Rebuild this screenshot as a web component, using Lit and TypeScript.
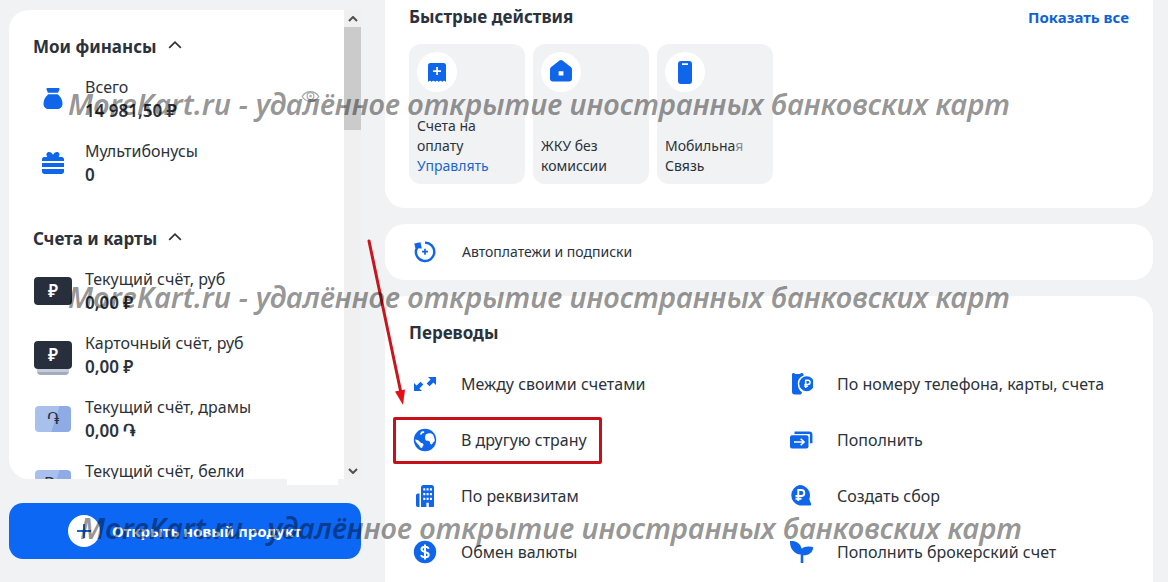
import { LitElement, html, css, svg, nothing } from "lit";
import { customElement, property } from "lit/decorators.js";

const ICONS: Record<string, unknown> = {
  bag: svg`<path fill="currentColor" d="M6.500 1h11c1 0 1.300.9.900 1.700L17 5.700H7L5.600 2.700C5.200 1.900 5.500 1 6.500 1ZM7.300 7.300h9.400c3 2.300 4.800 6 4.800 9.200 0 3.600-2 5.500-5.500 5.500H8c-3.500 0-5.500-1.900-5.500-5.500 0-3.200 1.800-6.900 4.800-9.200Z"/>`,
  gift: svg`<path fill="currentColor" d="M1 8.500C1 7 1.800 6 3.300 6h3C4.700 3.500 5.600 1 8 1c1.800 0 3.200 1.200 4 2.700C12.800 2.200 14.200 1 16 1c2.400 0 3.300 2.500 1.700 5h3C22.200 6 23 7 23 8.500V10H1ZM1 12h22v4H1ZM1 18h22v2.500c0 1.500-1 2.500-2.500 2.500h-17C2 23 1 22 1 20.500Z"/>`,
  bill: svg`<path fill="currentColor" fill-rule="evenodd" d="M5.500 3h13A2.500 2.500 0 0 1 21 5.500V22c-1.300-1.600-2.700-1.600-3.700 0-1.200-1.600-2.500-1.600-3.500 0-1.200-1.600-2.500-1.600-3.600 0-1.100-1.600-2.400-1.600-3.500 0-1-1.600-2.400-1.600-3.700 0V5.500A2.500 2.500 0 0 1 5.500 3ZM11.200 7v3.200H8v1.700h3.200V15h1.700v-3.100H16v-1.700h-3.100V7Z"/>`,
  home: svg`<path fill="currentColor" fill-rule="evenodd" d="M10.500.6a2.400 2.400 0 0 1 3 0l8.300 6.500c.8.600 1.200 1.500 1.200 2.400v8.900c0 1.900-1.100 3-3 3H4c-1.900 0-3-1.100-3-3V9.500c0-.9.400-1.800 1.200-2.400ZM9.600 11.200v4.400h4.800v-4.400Z"/>`,
  phone: svg`<path fill="currentColor" fill-rule="evenodd" d="M8 1h8c2 0 3 1 3 3v17c0 2-1 3-3 3H8c-2 0-3-1-3-3V4c0-2 1-3 3-3Zm1 2.300V5h6V3.300Z"/>`,
  repeat: svg`<path fill="none" stroke="currentColor" stroke-width="2.400" d="M12 2.600a9.200 9.200 0 1 1-8.700 6.500"/><path fill="currentColor" d="M1.300 3.500 7.500 2.200l1.300 6.200-3.300-.2-2.300 3.200Z"/><path stroke="currentColor" stroke-width="1.700" d="M12 8.700v6M9 11.700h6"/>`,
  swap: svg`<path fill="currentColor" d="M15 5h8v8l-2.600-2.600-3.900 3.900-2.800-2.800 3.900-3.900ZM1 11l2.600 2.600 3.900-3.900 2.800 2.800-3.900 3.900L9 19H1Z"/>`,
  globe: svg`<circle cx="12" cy="12" r="11.200" fill="currentColor"/><path fill="#fff" d="M8.500 3.600c2-.8 3.300-.2 2.600.8-.7 1-2 .4-2.200 1.700-.2 1-2.200.7-1.700-.7ZM12.600 6.700c2.300-1.700 5.300-2.100 7.300-.1 1 2 2 4.400 1.800 6.300-.5 1-1.500.9-2 2-.4 1.500-1.500 2.100-2.400.8-.5-1.300 0-2.400-1.400-2.800-1.400-.2-2.700.2-3.400-.9-.6-1.300-.4-4.400.1-5.300ZM2.100 11.500c2.500.3 4 1.100 4.700 2.300.8 1.400 2.600.9 3.500 2.300.7 1.600-.8 2.100-1.300 4-2-.2-2.400-1.800-3.500-3.300-.9-1.200-2.900-2.300-3.400-5.300Z"/>`,
  office: svg`<path fill="currentColor" fill-rule="evenodd" d="M8 3.500C8 2 9 1 10.500 1h8C20 1 21 2 21 3.500V22c0 .7-.5 1-1 1H8ZM10.300 4.200v2.300h2V4.200Zm3.300 0v2.300h2V4.200Zm3.300 0v2.300h2V4.200ZM10.300 9v2.300h2V9Zm3.300 0v2.300h2V9Zm3.300 0v2.300h2V9Zm-6.600 4.800v2.300h2v-2.300Zm3.300 0v2.300h2v-2.300Zm3.300 0v2.300h2v-2.300Zm-3.500 5V23h2.400v-4.200Z"/><path fill="currentColor" d="M6.500 9.500V23H5c-1.500 0-2-1-2-2v-9.500c0-1.200.8-2 2-2Z"/>`,
  dollar: svg`<circle cx="12" cy="12" r="11.200" fill="currentColor"/><path fill="none" stroke="#fff" stroke-width="2" d="M15.800 8.700C15 7.300 13.700 6.800 12 6.800c-2 0-3.500.9-3.500 2.500 0 3.600 7.200 1.700 7.200 5.400 0 1.700-1.600 2.600-3.700 2.600-1.900 0-3.300-.7-4-2.200M12 4.500v15"/>`,
  transfer: svg`<path fill="currentColor" d="M3 2.500C3 1.500 3.700 1 4.500 1c1 0 1 .9 2 .9h4c1 0 1-.9 2-.9s2 .5 2 1.500v1.200C10.500 5 8.800 8 8.800 11.700s1.500 6.800 4.200 8.500c-.2 1.500-1 2.300-2.500 2.300H5.500C4 22.500 3 21.500 3 20Z"/><circle cx="17.700" cy="11.700" r="7.500" fill="currentColor"/><path fill="none" stroke="#fff" stroke-width="1.500" d="M16.700 16V8.200h2.200a2.100 2.100 0 0 1 0 4.300h-3.600M15.300 14.200h3.500"/>`,
  topup: svg`<path fill="none" stroke="currentColor" stroke-width="2.500" d="M5.500 4.700h14.700c1.300 0 2 .7 2 2v8.500"/><rect x="1" y="7.300" width="18.500" height="13.200" rx="2" fill="currentColor"/><path fill="none" stroke="#fff" stroke-width="1.600" d="M5 14h9.800M11.700 10.800 15 14l-3.300 3.200"/>`,
  collect: svg`<path fill="currentColor" d="M10.500 1a10.500 10.500 0 0 1 9.800 14.200l1.600 4c.7 2 .2 2.300-1.400 2.300h-10A10.500 10.500 0 0 1 10.500 1Z"/><path fill="none" stroke="#fff" stroke-width="1.900" d="M9.300 17V6h3a3 3 0 0 1 0 6H6.500M6.500 14.700h6"/>`,
  sprout: svg`<path fill="currentColor" d="M1 1c6-.4 10.300 2.200 11.700 7.700C15 6.400 19.500 5.900 24 7c.3 5.500-4 8.500-9.700 8.300V23h-2.600v-8.500C5.500 14 .7 9 1 1Z"/>`,
  plus: svg`<path stroke="currentColor" stroke-width="1.800" d="M12 5v14M5 12h14"/>`,
  chevron: svg`<path fill="none" stroke="#2b323b" stroke-width="2" d="m5 15.500 7-7 7 7"/>`,
  eye: svg`<path fill="none" stroke="#a9abae" stroke-width="1.700" d="M1.500 12c5-8 16-8 21 0-5 8-16 8-21 0Z"/><circle cx="12" cy="11.500" r="4.300" fill="none" stroke="#a9abae" stroke-width="1.500"/><circle cx="12" cy="11.500" r="1.700" fill="#a9abae"/>`,
};

@customElement("bank-icon")
class BankIcon extends LitElement {
  @property() name = "";
  @property({ type: Number }) size = 24;
  static styles = css`
    :host { display: inline-flex; flex: none; color: #0f66ea; }
  `;
  render() {
    return html`<svg width=${this.size} height=${this.size} viewBox="0 0 24 24" aria-hidden="true">${ICONS[this.name]}</svg>`;
  }
}

interface Account { name: string; sum: string; sign: string; kind: string }

const ACCOUNTS: Account[] = [
  { name: "Текущий счёт, руб", sum: "0,00 ₽", sign: "₽", kind: "dark" },
  { name: "Карточный счёт, руб", sum: "0,00 ₽", sign: "₽", kind: "dark stacked" },
  { name: "Текущий счёт, драмы", sum: "0,00 ֏", sign: "֏", kind: "light" },
  { name: "Текущий счёт, белки", sum: "0,00 Br", sign: "Br", kind: "light" },
];

const TRANSFERS = [
  { icon: "swap", label: "Между своими счетами" },
  { icon: "transfer", label: "По номеру телефона, карты, счета" },
  { icon: "globe", label: "В другую страну", marked: true },
  { icon: "topup", label: "Пополнить" },
  { icon: "office", label: "По реквизитам" },
  { icon: "collect", label: "Создать сбор" },
  { icon: "dollar", label: "Обмен валюты" },
  { icon: "sprout", label: "Пополнить брокерский счет" },
];

const MARK = "MoreKart.ru - удалённое открытие иностранных банковских карт";

@customElement("app-root")
class AppRoot extends LitElement {
  static styles = css`
    :host {
      display: block;
      position: relative;
      height: 100vh;
      overflow: hidden;
      background: #f1f2f4;
      color: #2b323b;
      font-family: "Noto Sans", "DejaVu Sans", sans-serif;
      font-size: 16px;
      line-height: 24px;
    }
    * { box-sizing: border-box; }
    h2, p, ul { margin: 0; padding: 0; }
    ul { list-style: none; }
    a { color: inherit; text-decoration: none; }
    button { font: inherit; color: inherit; border: 0; background: none; padding: 0; cursor: pointer; }
    h2 { font-size: 17px; line-height: 24px; font-weight: 700; }
    .layout {
      display: grid;
      grid-template-columns: 352px minmax(0, 1fr);
      column-gap: 24px;
      height: 100%;
      padding: 0 15px 0 9px;
    }
    .side { display: flex; flex-direction: column; gap: 24px; min-height: 0; padding: 10px 0 23px; }
    .panel { position: relative; flex: 1; display: flex; min-height: 0; }
    .patch { position: absolute; left: 278px; bottom: -6px; width: 51px; height: 7px; background: #fff; }
    .finance {
      flex: 1;
      overflow: hidden;
      padding: 25px 24px 0;
      background: #fff;
      border-radius: 20px 0 0 20px;
    }
    .bar { display: flex; flex-direction: column; justify-content: space-between; align-items: center; width: 17px; background: #f0f0f1; }
    .bar button { display: flex; align-items: center; justify-content: center; width: 17px; height: 17px; }
    .thumb { width: 17px; height: 103px; background: #cbcbcb; margin-bottom: auto; }
    .group { margin-bottom: 40px; }
    .toggle { display: flex; align-items: center; gap: 8px; height: 24px; margin-bottom: 16px; }
    .toggle bank-icon { margin-bottom: 4px; }
    .rows { display: grid; gap: 16px; }
    .row { display: grid; grid-template-columns: 40px 1fr auto; column-gap: 12px; align-items: center; height: 48px; }
    .row .pic { display: flex; justify-content: center; }
    .row b { display: block; font-size: 17px; font-weight: 600; }
    .card {
      position: relative;
      display: flex;
      align-items: center;
      justify-content: center;
      width: 38px;
      height: 28px;
      border-radius: 4px;
      font-size: 17px;
      font-weight: 600;
    }
    .dark { background: #272f3d; color: #fff; }
    .light { width: 36px; height: 26px; background: linear-gradient(108deg, #a9bfec 55%, #8eabe6 56%); font-weight: 400; }
    .stacked::after {
      content: "";
      position: absolute;
      top: 28px;
      left: 3px;
      right: 3px;
      height: 6px;
      background: linear-gradient(#c3cddc 50%, #a2acba 50%);
      border-radius: 0 0 4px 4px;
    }
    .open {
      display: flex;
      align-items: center;
      gap: 12px;
      height: 56px;
      padding: 0 59px;
      border-radius: 14px;
      background: #0c67f5;
      color: #fff;
      font-size: 15px;
      font-weight: 700;
      white-space: nowrap;
    }
    .round { display: flex; align-items: center; justify-content: center; flex: none; border-radius: 50%; background: #fff; }
    .open .round { width: 32px; height: 32px; }
    .main { display: flex; flex-direction: column; gap: 16px; min-width: 0; }
    .box { background: #fff; border-radius: 20px; }
    .quick { padding: 5px 24px 24px; border-radius: 0 0 20px 20px; }
    .head { display: flex; justify-content: space-between; align-items: center; margin-bottom: 15px; }
    .head a { color: #0f62d6; font-size: 15px; font-weight: 700; }
    .tiles { display: flex; gap: 8px; }
    .tile {
      display: flex;
      flex-direction: column;
      justify-content: space-between;
      width: 116px;
      height: 140px;
      padding: 8px;
      border-radius: 12px;
      background: #f1f2f4;
      font-size: 14px;
      line-height: 20px;
    }
    .tile .round { width: 40px; height: 40px; }
    .tile .link { color: #1a66cf; }
    .tile .fade { color: #8a8d91; }
    .auto { display: flex; align-items: center; gap: 25px; height: 56px; padding: 0 28px; font-size: 14px; }
    .moves { flex: 1; padding: 25px 24px 0; border-radius: 20px 20px 0 0; }
    .grid { display: grid; grid-template-columns: 1fr 1fr; column-gap: 32px; margin-top: 11px; }
    .grid a { position: relative; display: flex; align-items: center; gap: 24px; width: fit-content; height: 56px; padding-left: 4px; white-space: nowrap; }
    .marked::after { content: ""; position: absolute; inset: 5px -15px 4px -16px; border: 3px solid #c8101a; border-radius: 2px; }
    .arrow { position: absolute; left: 360px; top: 236px; pointer-events: none; }
    .mark {
      position: absolute;
      left: 68px;
      font-size: 29px;
      line-height: 36px;
      font-style: italic;
      font-weight: 600;
      color: rgba(0, 0, 0, 0.43);
      white-space: nowrap;
      pointer-events: none;
    }
    .m1 { top: 86px; }
    .m2 { top: 279px; }
    .m3 { top: 510px; left: 80px; }
  `;

  render() {
    return html`
      <div class="layout">
        <aside class="side">
          <div class="panel">
            <div class="finance">
              <section class="group">
                <h2><button class="toggle">Мои финансы <bank-icon name="chevron" size="20"></bank-icon></button></h2>
                <ul class="rows">
                  <li class="row">
                    <span class="pic"><bank-icon name="bag"></bank-icon></span>
                    <span>Всего<b>14 981,50 ₽</b></span>
                    <button aria-label="Скрыть"><bank-icon name="eye" size="19"></bank-icon></button>
                  </li>
                  <li class="row">
                    <span class="pic"><bank-icon name="gift"></bank-icon></span>
                    <span>Мультибонусы<b>0</b></span>
                  </li>
                </ul>
              </section>
              <section class="group">
                <h2><button class="toggle">Счета и карты <bank-icon name="chevron" size="20"></bank-icon></button></h2>
                <ul class="rows">
                  ${ACCOUNTS.map((a) => html`
                    <li class="row">
                      <span class="pic"><span class="card ${a.kind}">${a.sign}</span></span>
                      <span>${a.name}<b>${a.sum}</b></span>
                    </li>`)}
                </ul>
              </section>
            </div>
            <div class="bar">
              <button aria-label="Вверх"><svg width="10" height="6" viewBox="0 0 10 6"><path d="m1 5 4-4 4 4" fill="none" stroke="#505050" stroke-width="2"/></svg></button>
              <div class="thumb"></div>
              <button aria-label="Вниз"><svg width="10" height="6" viewBox="0 0 10 6"><path d="m1 1 4 4 4-4" fill="none" stroke="#505050" stroke-width="2"/></svg></button>
            </div>
            <div class="patch"></div>
          </div>
          <button class="open"><span class="round"><bank-icon name="plus"></bank-icon></span>Открыть новый продукт</button>
        </aside>
        <main class="main">
          <section class="box quick">
            <div class="head"><h2>Быстрые действия</h2><a href="#all">Показать все</a></div>
            <div class="tiles">
              <div class="tile"><span class="round"><bank-icon name="bill"></bank-icon></span><span>Счета на оплату<br><a class="link" href="#manage">Управлять</a></span></div>
              <a class="tile" href="#home"><span class="round"><bank-icon name="home"></bank-icon></span><span>ЖКУ без комиссии</span></a>
              <a class="tile" href="#mobile"><span class="round"><bank-icon name="phone"></bank-icon></span><span>Мобильна<span class="fade">я</span> Связь</span></a>
            </div>
          </section>
          <a class="box auto" href="#auto"><bank-icon name="repeat"></bank-icon>Автоплатежи и подписки</a>
          <section class="box moves">
            <h2>Переводы</h2>
            <div class="grid">
              ${TRANSFERS.map((t) => html`<a href="#${t.icon}" class=${t.marked ? "marked" : nothing}><bank-icon name=${t.icon}></bank-icon>${t.label}</a>`)}
            </div>
          </section>
        </main>
      </div>
      <svg class="arrow" width="50" height="172" viewBox="0 0 50 172" aria-hidden="true">
        <path d="M9 5 41 157" stroke="#cb141b" stroke-width="3" stroke-linecap="round"/>
        <path d="M35 155.500 45 153.500 43 169Z" fill="#e60f18"/>
      </svg>
      <p class="mark m1">${MARK}</p>
      <p class="mark m2">${MARK}</p>
      <p class="mark m3">${MARK}</p>
    `;
  }
}
